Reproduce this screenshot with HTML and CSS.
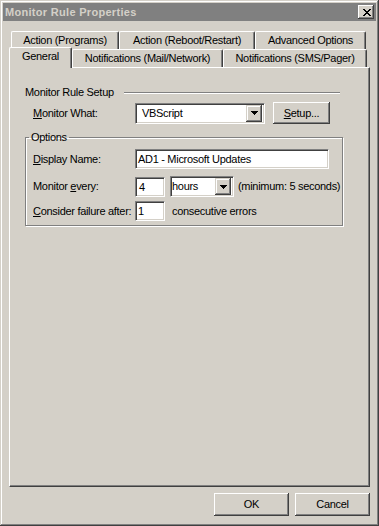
FILE: index.html
```html
<!DOCTYPE html>
<html lang="en">
<head>
  <meta charset="UTF-8" />
  <title>Monitor Rule Properties</title>
  <link rel="stylesheet" href="styles.css">
</head>
<body>
  <div class="window">
    <div class="titlebar">
      <span class="title">Monitor Rule Properties</span>
      <span class="close">
        <svg width="8" height="7" viewBox="0 0 8 7" shape-rendering="crispEdges">
          <path d="M0 0h2v1h-2zM6 0h2v1h-2zM1 1h2v1h-2zM5 1h2v1h-2zM2 2h4v1h-4zM3 3h2v1h-2zM2 4h4v1h-4zM1 5h2v1h-2zM5 5h2v1h-2zM0 6h2v1h-2zM6 6h2v1h-2z" fill="#000"/>
        </svg>
      </span>
    </div>

    <div class="content">
      <div class="tab-row back">
        <div class="tab w-prog">Action (Programs)</div>
        <div class="tab w-reboot">Action (Reboot/Restart)</div>
        <div class="tab w-adv">Advanced Options</div>
      </div>
      <div class="tab-row front">
        <div class="tab active w-gen">General</div>
        <div class="tab w-mail">Notifications (Mail/Network)</div>
        <div class="tab w-sms">Notifications (SMS/Pager)</div>
      </div>

      <div class="panel">
        <div class="section-head">
          <span>Monitor Rule Setup</span>
          <span class="rule"></span>
        </div>

        <div class="row setup-row">
          <span class="lbl"><u>M</u>onitor What:</span>
          <div class="combo w-what">
            <span class="val pad-what">VBScript</span>
            <span class="drop"><svg width="7" height="4" viewBox="0 0 7 4" shape-rendering="crispEdges"><path d="M0 0h7v1h-1v1h-1v1h-1v1h-1v-1h-1v-1h-1v-1h-1z" fill="#000"/></svg></span>
          </div>
          <span class="btn btn-setup"><u>S</u>etup...</span>
        </div>

        <fieldset class="group">
          <legend>Options</legend>

          <div class="row">
            <span class="lbl"><u>D</u>isplay Name:</span>
            <span class="field w-name">AD1 - Microsoft Updates</span>
          </div>

          <div class="row row-every">
            <span class="lbl">Monitor <u>e</u>very:</span>
            <span class="field small pad-4">4</span>
            <div class="combo w-hours">
              <span class="val">hours</span>
              <span class="drop"><svg width="7" height="4" viewBox="0 0 7 4" shape-rendering="crispEdges"><path d="M0 0h7v1h-1v1h-1v1h-1v1h-1v-1h-1v-1h-1v-1h-1z" fill="#000"/></svg></span>
            </div>
            <span class="note">(minimum: 5 seconds)</span>
          </div>

          <div class="row row-fail">
            <span class="lbl"><u>C</u>onsider failure after:</span>
            <span class="field small">1</span>
            <span class="note wide">consecutive errors</span>
          </div>
        </fieldset>
      </div>

      <div class="buttons">
        <span class="btn btn-dlg">OK</span>
        <span class="btn btn-dlg">Cancel</span>
      </div>
    </div>
  </div>
</body>
</html>
```

FILE: styles.css
```css
body {
  margin: 0;
  font-family: "Liberation Sans", Arial, sans-serif;
  font-size: 11px;
  line-height: 13px;
  letter-spacing: -0.3px;
  color: #000;
  background: #d4d0c8;
}

.window {
  width: 379px;
  height: 526px;
  box-sizing: border-box;
  padding: 3px;
  background: #d4d0c8;
  box-shadow: inset -1px -1px #404040, inset 1px 1px #d4d0c8,
              inset -2px -2px #808080, inset 2px 2px #fff;
  display: flex;
  flex-direction: column;
}

/* title bar (inactive) */
.titlebar {
  height: 18px;
  background: #808080;
  color: #d4d0c8;
  font-weight: bold;
  letter-spacing: 0.3px;
  display: flex;
  align-items: center;
  padding-left: 2px;
}

.title {
  flex: 1;
}

.close {
  width: 16px;
  height: 14px;
  box-sizing: border-box;
  margin-right: 2px;
  background: #d4d0c8;
  box-shadow: inset -1px -1px #404040, inset 1px 1px #fff,
              inset -2px -2px #808080;
  display: flex;
  align-items: center;
  justify-content: center;
  padding-left: 1px;
}

.close svg {
  display: block;
}

.content {
  flex: 1;
  padding: 10px 6px 7px;
  display: flex;
  flex-direction: column;
}

/* tabs */
.tab-row {
  display: flex;
  height: 18px;
}

.tab-row.back {
  padding-left: 2px;
}

.tab {
  flex: none;
  box-sizing: border-box;
  height: 18px;
  border-left: 1px solid #fff;
  border-top: 1px solid #fff;
  border-right: 1px solid #404040;
  border-radius: 2px 2px 0 0;
  box-shadow: inset -1px 0 #808080;
  background: #d4d0c8;
  text-align: center;
  line-height: 16px;
  white-space: nowrap;
}

.tab.active {
  position: relative;
  z-index: 1;
  height: 21px;
  margin-top: -2px;
  margin-bottom: -1px;
  line-height: 17px;
}

.w-prog { width: 108px; }
.w-reboot { width: 136px; }
.w-adv { width: 111px; }
.w-gen { width: 63px; }
.w-mail { width: 151px; }
.w-sms { width: 144px; }

/* page */
.panel {
  height: 420px;
  box-sizing: border-box;
  border-left: 1px solid #fff;
  border-top: 1px solid #fff;
  border-right: 1px solid #404040;
  border-bottom: 1px solid #404040;
  box-shadow: inset -1px -1px #808080;
  padding: 18px 14px 0;
}

.section-head {
  display: flex;
  align-items: center;
  gap: 10px;
  height: 13px;
  padding-left: 1px;
}

.rule {
  flex: 1;
  margin-right: 15px;
  border-top: 1px solid #808080;
  border-bottom: 1px solid #fff;
}

.row {
  display: flex;
  align-items: center;
}

.row > * {
  flex: none;
}

.lbl {
  width: 102px;
  white-space: nowrap;
}

.setup-row {
  height: 22px;
  margin-top: 3px;
}

.setup-row .lbl {
  margin-left: 9px;
}

/* sunken controls */
.field,
.combo {
  box-sizing: border-box;
  background: #fff;
  border-top: 1px solid #808080;
  border-left: 1px solid #808080;
  border-bottom: 1px solid #fff;
  border-right: 1px solid #fff;
  box-shadow: inset 1px 1px #404040, inset -1px -1px #d4d0c8;
  white-space: nowrap;
}

.field {
  height: 20px;
  line-height: 18px;
  padding-left: 2px;
}

.field.small {
  width: 30px;
  padding-left: 2px;
}

.field.pad-4 {
  padding-left: 3px;
}

.w-name {
  width: 194px;
}

.combo {
  height: 21px;
  display: flex;
  align-items: center;
  padding: 2px;
}

.combo .val {
  flex: 1;
}

.combo .pad-what {
  padding-left: 4px;
}

.w-what { width: 130px; }

.w-hours {
  width: 64px;
  margin-left: 5px;
  padding-left: 1px;
}

.drop {
  flex: none;
  width: 16px;
  height: 17px;
  box-sizing: border-box;
  background: #d4d0c8;
  box-shadow: inset -1px -1px #404040, inset 1px 1px #d4d0c8,
              inset -2px -2px #808080, inset 2px 2px #fff;
  display: flex;
  align-items: center;
  justify-content: center;
}

.drop svg {
  display: block;
}

/* raised buttons */
.btn {
  box-sizing: border-box;
  background: #d4d0c8;
  box-shadow: inset -1px -1px #404040, inset 1px 1px #fff,
              inset -2px -2px #808080;
  display: flex;
  align-items: center;
  justify-content: center;
}

.btn-setup {
  width: 57px;
  height: 22px;
  margin-left: 8px;
}

/* options group */
.group {
  margin: 7px 12px 0 1px;
  padding: 5px 7px 4px;
  border: 1px solid #808080;
  box-shadow: inset 1px 1px #fff, 1px 1px #fff;
  min-width: 0;
}

.group legend {
  margin-left: -4px;
  padding: 0 2px;
}

.row-every {
  margin-top: 7px;
}

.row-fail {
  margin-top: 4px;
}

.note {
  margin-left: 4px;
  white-space: nowrap;
}

.note.wide {
  margin-left: 7px;
}

.buttons {
  display: flex;
  justify-content: flex-end;
  gap: 6px;
  margin-top: 6px;
}

.btn-dlg {
  width: 75px;
  height: 23px;
}
```
